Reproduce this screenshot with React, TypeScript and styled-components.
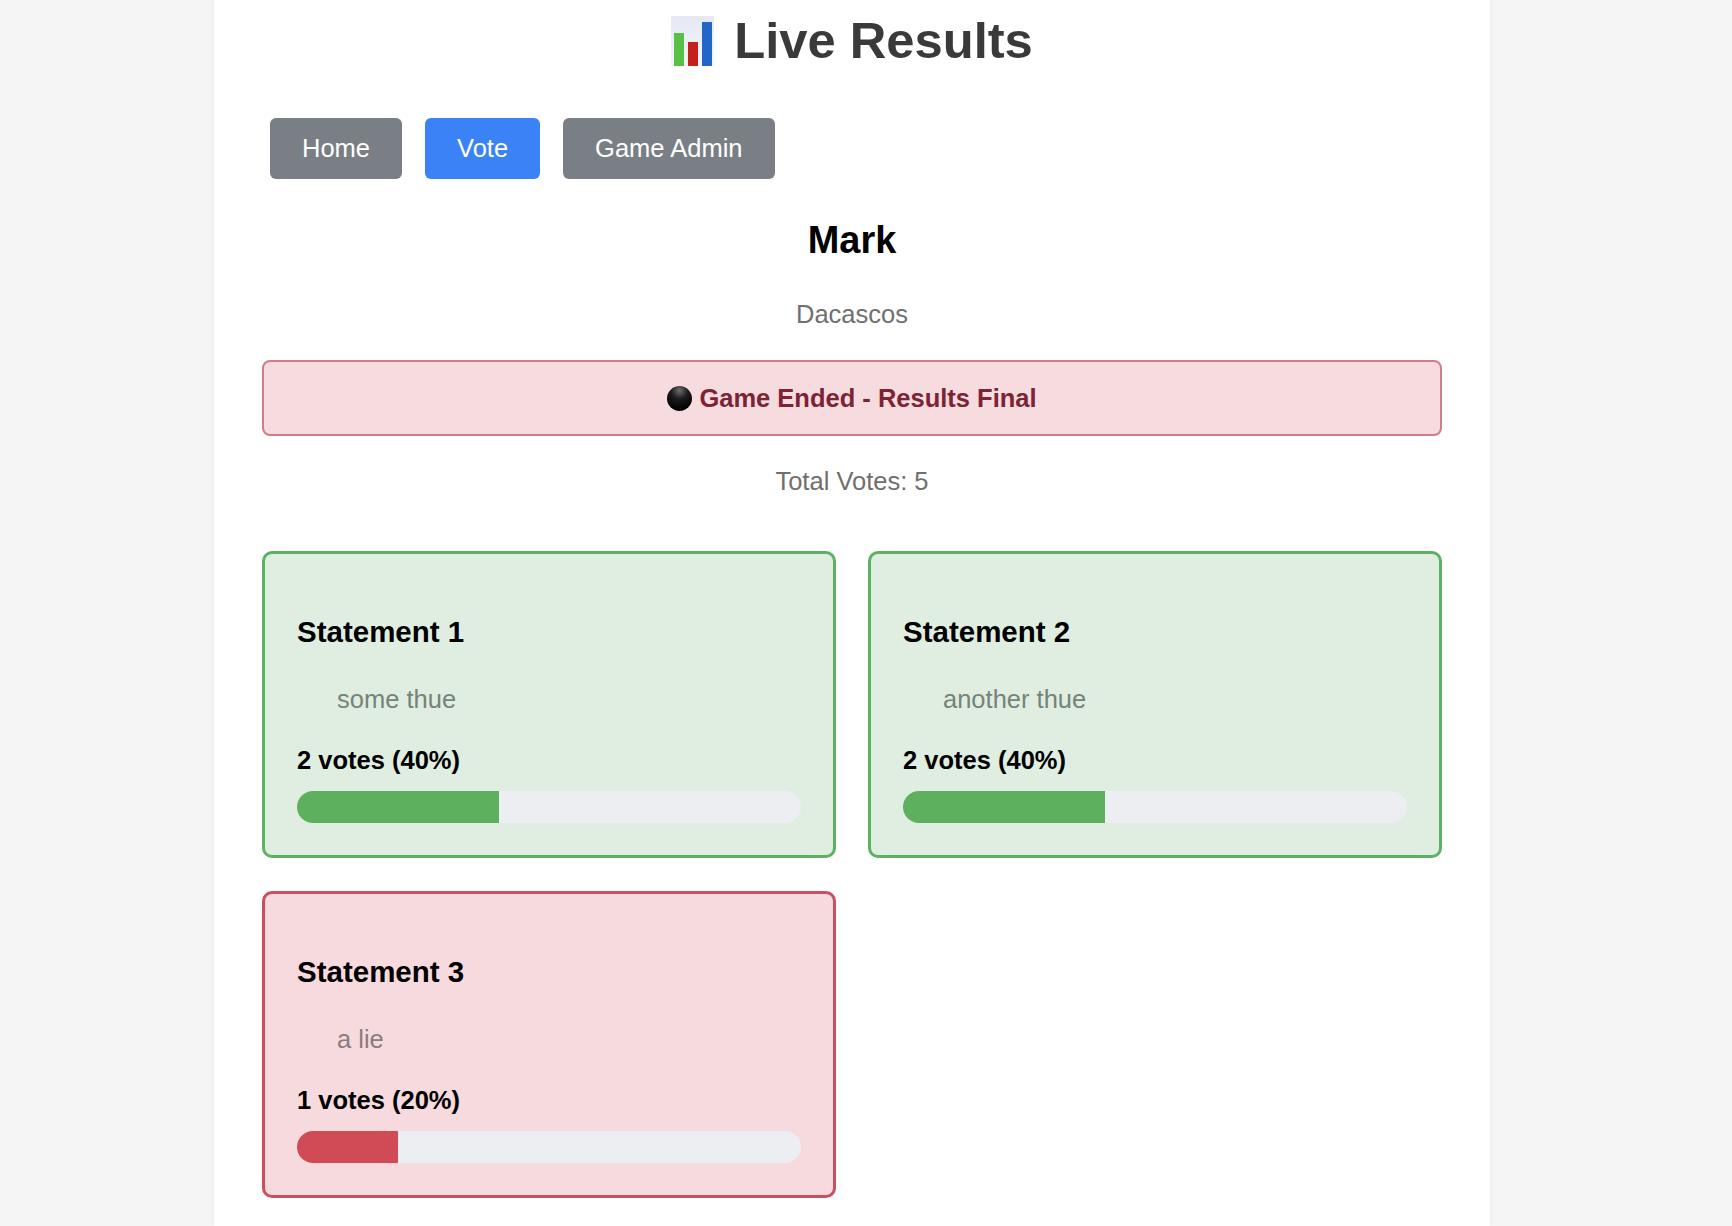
import React from "react";
import styled, {createGlobalStyle} from "styled-components";

const GlobalStyle = createGlobalStyle`
  html, body {
    margin: 0;
    height: 100%;
    overflow: hidden;
    background: #f5f5f5;
    font-family: "Liberation Sans", Arial, sans-serif;
  }
`;

const Page = styled.div`
  box-sizing: border-box;
  width: 1276px;
  height: 1226px;
  margin-left: 214px;
  padding: 12px 48px 0;
  background: #fff;
  box-shadow: 0 0 6px rgba(0, 0, 0, 0.06);
`;

const Title = styled.h1`
  display: flex;
  align-items: center;
  justify-content: center;
  gap: 20px;
  height: 58px;
  margin: 0 0 47px;
  font-size: 50.7px;
  line-height: 58px;
  font-weight: 700;
  color: #3a3a3a;
`;

const Nav = styled.nav`
  display: flex;
  gap: 23px;
  padding: 0 8px;
  margin-bottom: 39px;
`;

const NavButton = styled.a<{$active?: boolean}>`
  display: flex;
  align-items: center;
  height: 61px;
  padding: 0 32px;
  margin-top: 1px;
  border-radius: 6px;
  font-size: 25.5px;
  color: #fff;
  background: ${({$active}) => ($active ? "#3b82f6" : "#7a7f85")};
`;

const Name = styled.h2`
  margin: 0 0 37px;
  font-size: 37.9px;
  line-height: 44px;
  font-weight: 700;
  color: #000;
  text-align: center;
`;

const Subtitle = styled.p`
  margin: 0 0 31px;
  font-size: 25.5px;
  line-height: 30px;
  color: #6f6f6f;
  text-align: center;
`;

const Banner = styled.div`
  box-sizing: border-box;
  display: flex;
  align-items: center;
  justify-content: center;
  gap: 7px;
  height: 76px;
  margin-bottom: 30px;
  border: 2px solid #cf7d8a;
  border-radius: 8px;
  background: #f6dbdf;
  font-size: 25.5px;
  font-weight: 700;
  color: #7c2335;
`;

const TotalVotes = styled.p`
  margin: 0 0 55px;
  font-size: 25.5px;
  line-height: 30px;
  color: #6f6f6f;
  text-align: center;
`;

const Grid = styled.div`
  display: grid;
  grid-template-columns: 1fr 1fr;
  gap: 33px 32px;
`;

const Card = styled.section<{$lie?: boolean}>`
  box-sizing: border-box;
  height: 307px;
  padding: 61px 32px 0;
  border: 3px solid ${({$lie}) => ($lie ? "#cb4f5f" : "#5cb262")};
  border-radius: 10px;
  background: ${({$lie}) => ($lie ? "#f6dadd" : "#dfeee0")};
`;

const CardTitle = styled.h3`
  margin: 0 0 35px;
  font-size: 29.5px;
  line-height: 34px;
  font-weight: 700;
  color: #000;
`;

const Statement = styled.p<{$lie?: boolean}>`
  margin: 0 0 30px 40px;
  font-size: 25.5px;
  line-height: 30px;
  color: ${({$lie}) => ($lie ? "#8e7b7e" : "#76837a")};
`;

const VoteCount = styled.div`
  margin-bottom: 15px;
  font-size: 25.5px;
  line-height: 32px;
  font-weight: 700;
  color: #000;
`;

const Track = styled.div`
  height: 32px;
  border-radius: 16px;
  overflow: hidden;
  background: #eceef1;
`;

const Fill = styled.div<{$lie?: boolean}>`
  height: 100%;
  background: ${({$lie}) => ($lie ? "#d14b57" : "#5cb05e")};
`;

const ChartIcon = () => (
	<svg width="43" height="50" viewBox="0 0 43 50" aria-hidden="true">
		<defs>
			<linearGradient id="chartBg" x1="0" y1="0" x2="0" y2="1">
				<stop offset="0" stopColor="#e6e9f4"/>
				<stop offset="1" stopColor="#f3f5f9"/>
			</linearGradient>
		</defs>
		<rect width="43" height="50" fill="url(#chartBg)"/>
		<rect x="3" y="17" width="10" height="33" fill="#57c045"/>
		<rect x="17" y="26" width="10" height="24" fill="#c4201c"/>
		<rect x="31" y="6" width="10" height="44" fill="#2266c8"/>
	</svg>
);

const BlackCircle = () => (
	<svg width="25" height="25" viewBox="0 0 25 25" aria-hidden="true">
		<defs>
			<radialGradient id="ballShade" cx="50%" cy="18%" r="75%">
				<stop offset="0" stopColor="#6e6e6e"/>
				<stop offset="0.45" stopColor="#1c1c1c"/>
				<stop offset="1" stopColor="#000"/>
			</radialGradient>
		</defs>
		<circle cx="12.5" cy="12.5" r="12.5" fill="url(#ballShade)"/>
	</svg>
);

const results = [
	{title: "Statement 1", text: "some thue", votes: 2, percent: 40, lie: false},
	{title: "Statement 2", text: "another thue", votes: 2, percent: 40, lie: false},
	{title: "Statement 3", text: "a lie", votes: 1, percent: 20, lie: true},
];

export default function App() {
	return (
		<>
			<GlobalStyle/>
			<Page>
				<Title><ChartIcon/>Live Results</Title>
				<Nav>
					<NavButton>Home</NavButton>
					<NavButton $active>Vote</NavButton>
					<NavButton>Game Admin</NavButton>
				</Nav>
				<Name>Mark</Name>
				<Subtitle>Dacascos</Subtitle>
				<Banner><BlackCircle/>Game Ended - Results Final</Banner>
				<TotalVotes>Total Votes: 5</TotalVotes>
				<Grid>
					{results.map(r => (
						<Card key={r.title} $lie={r.lie}>
							<CardTitle>{r.title}</CardTitle>
							<Statement $lie={r.lie}>{r.text}</Statement>
							<VoteCount>{r.votes} votes ({r.percent}%)</VoteCount>
							<Track>
								<Fill $lie={r.lie} style={{width: `${r.percent}%`}}/>
							</Track>
						</Card>
					))}
				</Grid>
			</Page>
		</>
	);
}
